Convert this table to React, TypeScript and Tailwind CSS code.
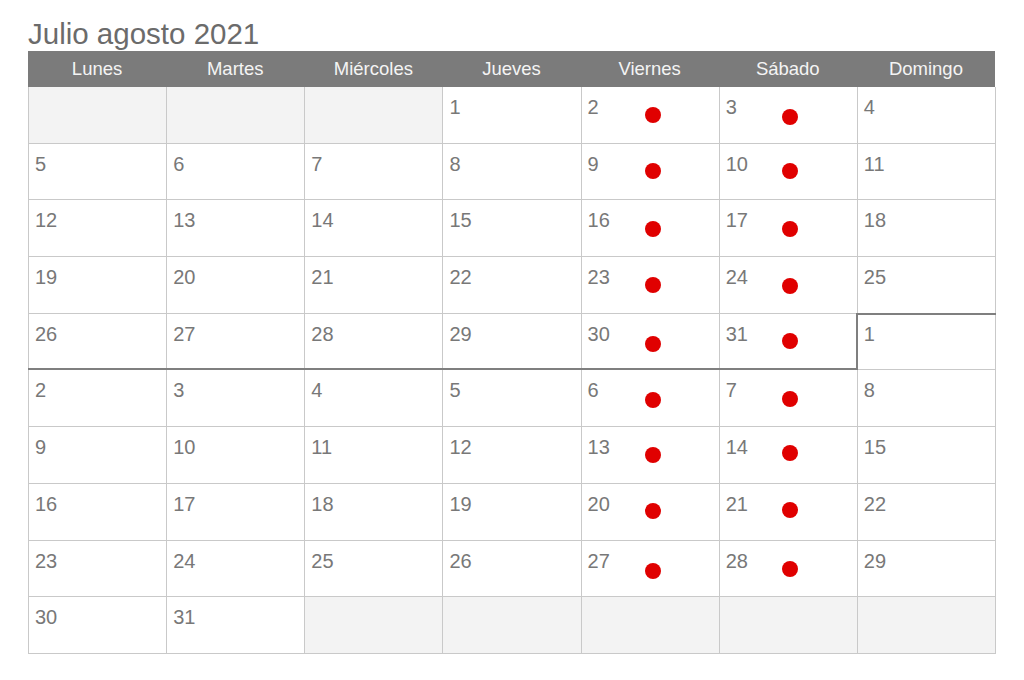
import React from "react";

const days = ["Lunes", "Martes", "Miércoles", "Jueves", "Viernes", "Sábado", "Domingo"];

const rows: (number | null)[][] = [
  [null, null, null, 1, 2, 3, 4],
  [5, 6, 7, 8, 9, 10, 11],
  [12, 13, 14, 15, 16, 17, 18],
  [19, 20, 21, 22, 23, 24, 25],
  [26, 27, 28, 29, 30, 31, 1],
  [2, 3, 4, 5, 6, 7, 8],
  [9, 10, 11, 12, 13, 14, 15],
  [16, 17, 18, 19, 20, 21, 22],
  [23, 24, 25, 26, 27, 28, 29],
  [30, 31, null, null, null, null, null],
];

// dot vertical centers (from row top) for Friday / Saturday
const dotY: [number, number][] = [
  [28, 30],
  [27, 27],
  [28.5, 28.5],
  [28, 29],
  [30, 27],
  [29.5, 28.5],
  [28, 26],
  [27, 26],
  [30, 28],
];

export default function App() {
  return (
    <div
      className="w-[1024px] h-[680px] bg-white pl-[28px] pt-[19px]"
      style={{ fontFamily: '"Liberation Sans", Arial, sans-serif' }}
    >
      <div className="text-[29.5px] leading-[29px] text-[#6b6b6b]">Julio agosto 2021</div>
      <div className="mt-[3px] w-[967px] h-[36px] bg-[#7b7b7b] grid grid-cols-7">
        {days.map((d) => (
          <div key={d} className="flex items-center justify-center text-[18.5px] text-[#f4f4f4]">
            {d}
          </div>
        ))}
      </div>
      <div className="w-[968px] border-l border-[#c9c9c9] grid grid-cols-7">
        {rows.map((row, r) =>
          row.map((n, c) => {
            const empty = n === null;
            const dot = r < 9 && (c === 4 || c === 5);
            return (
              <div
                key={`${r}-${c}`}
                className={`relative h-[56.7px] border-r border-b border-[#c9c9c9] ${
                  empty ? "bg-[#f3f3f3]" : "bg-white"
                }`}
              >
                {!empty && (
                  <div className="pl-[6px] pt-[10px] text-[20px] leading-[20px] text-[#787878]">{n}</div>
                )}
                {dot && (
                  <span
                    className="absolute w-4 h-4 rounded-full bg-[#e00000]"
                    style={{ left: c === 4 ? 63 : 62, top: dotY[r][c - 4] - 8 }}
                  />
                )}
                {r === 4 && c <= 5 && (
                  <span className="absolute left-[-1px] right-[-1px] bottom-[-1px] h-[2px] bg-[#7f7f7f]" />
                )}
                {r === 4 && c === 5 && (
                  <span className="absolute right-[-1px] top-[-1px] bottom-[-1px] w-[2px] bg-[#7f7f7f]" />
                )}
                {r === 4 && c === 6 && (
                  <span className="absolute left-[-1px] right-[-1px] top-[-1px] h-[2px] bg-[#7f7f7f]" />
                )}
              </div>
            );
          })
        )}
      </div>
    </div>
  );
}
